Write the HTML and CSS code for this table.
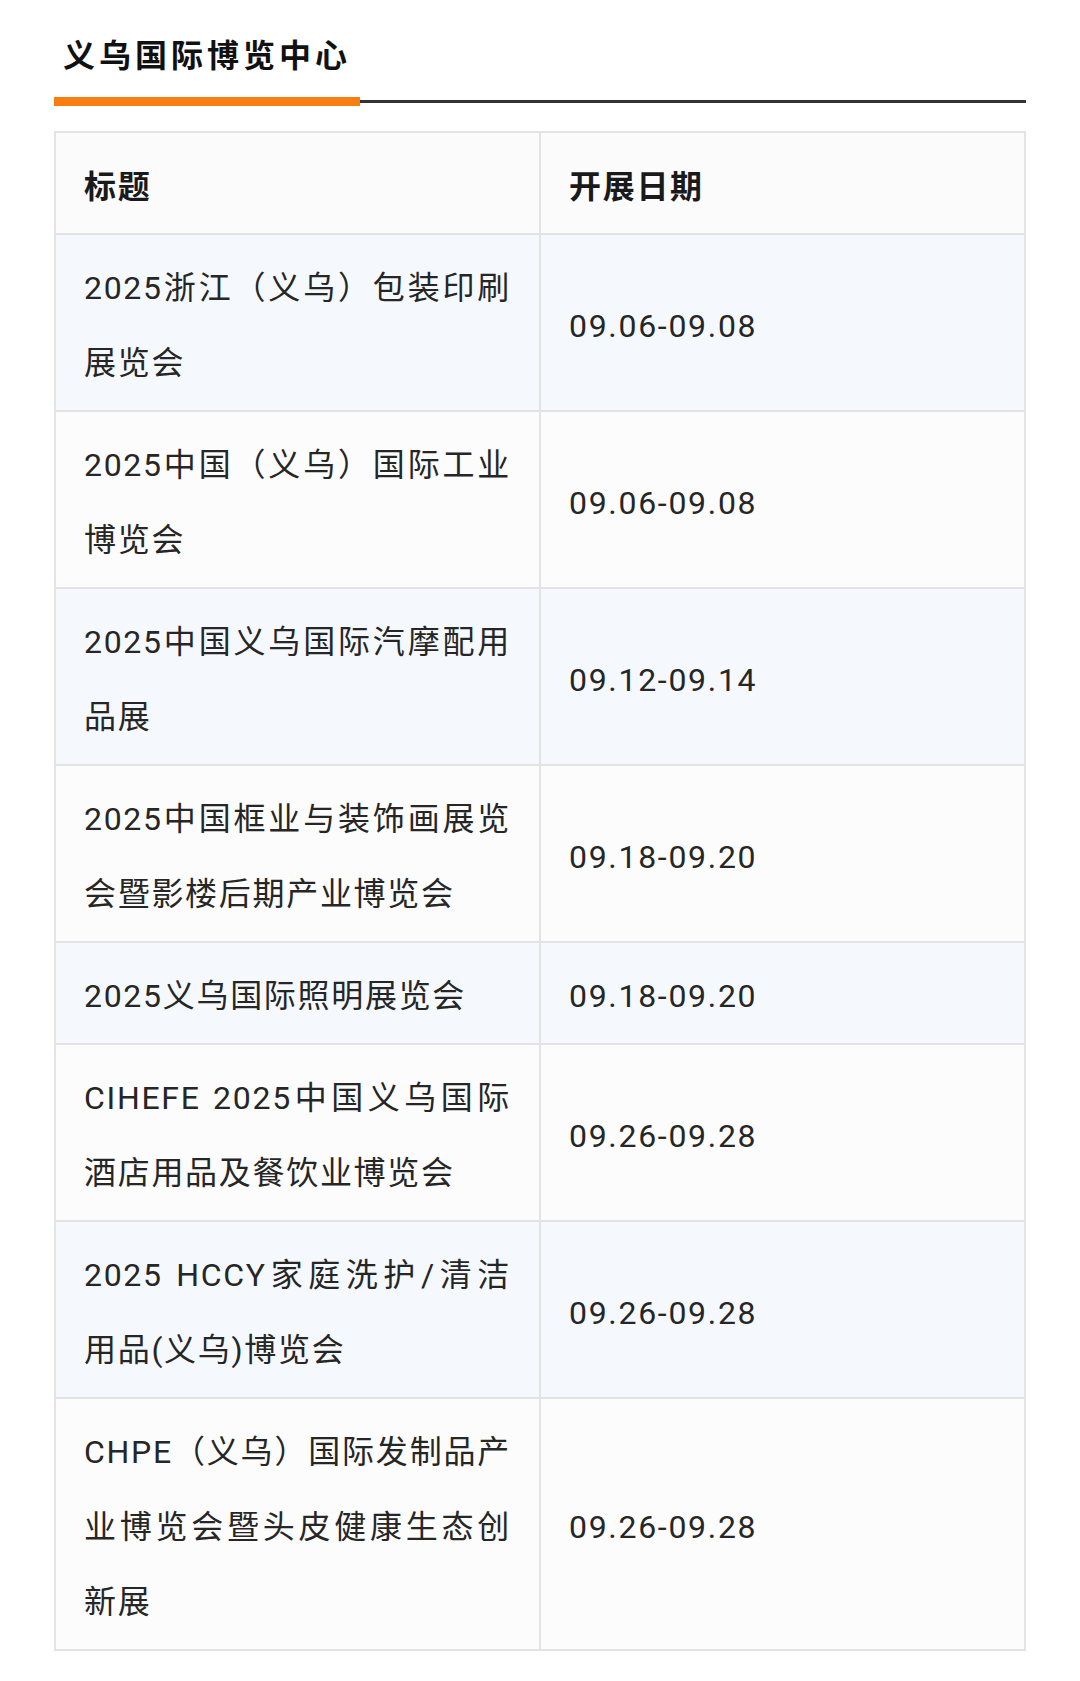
FILE: index.html
```html
<!DOCTYPE html>
<html lang="zh-CN">
<head>
<meta charset="utf-8">
<title>义乌国际博览中心</title>
<link rel="stylesheet" href="styles.css">
</head>
<body>
<div class="page">
  <h2 class="title">义乌国际博览中心</h2>
  <div class="rule"><span class="rule-accent"></span><span class="rule-line"></span></div>
  <table class="expo">
    <thead>
      <tr><th class="name">标题</th><th class="date">开展日期</th></tr>
    </thead>
    <tbody>
      <tr><td class="name">2025浙江（义乌）包装印刷展览会</td><td class="date">09.06-09.08</td></tr>
      <tr><td class="name">2025中国（义乌）国际工业博览会</td><td class="date">09.06-09.08</td></tr>
      <tr><td class="name">2025中国义乌国际汽摩配用品展</td><td class="date">09.12-09.14</td></tr>
      <tr><td class="name">2025中国框业与装饰画展览会暨影楼后期产业博览会</td><td class="date">09.18-09.20</td></tr>
      <tr><td class="name">2025义乌国际照明展览会</td><td class="date">09.18-09.20</td></tr>
      <tr><td class="name">CIHEFE 2025中国义乌国际酒店用品及餐饮业博览会</td><td class="date">09.26-09.28</td></tr>
      <tr><td class="name">2025 HCCY家庭洗护/清洁用品(义乌)博览会</td><td class="date">09.26-09.28</td></tr>
      <tr><td class="name">CHPE（义乌）国际发制品产业博览会暨头皮健康生态创新展</td><td class="date">09.26-09.28</td></tr>
    </tbody>
  </table>
</div>
</body>
</html>
```

FILE: styles.css
```css
html, body {
  margin: 0;
  padding: 0;
  background: #ffffff;
}

body {
  font-family: Roboto, "Noto Sans CJK SC", "Noto Sans", sans-serif;
  color: #222222;
}

.page {
  padding: 0 54px 20px;
}

.title {
  margin: 0;
  padding: 36px 0 0 9px;
  font-size: 32px;
  line-height: 40px;
  font-weight: 700;
  letter-spacing: 4px;
  color: #111111;
}

.rule {
  display: flex;
  align-items: center;
  height: 9px;
  margin-top: 21px;
}

.rule-accent {
  width: 306px;
  height: 9px;
  background: #fa7d10;
}

.rule-line {
  flex: 1;
  height: 3px;
  background: #333333;
}

.expo {
  width: 100%;
  margin-top: 25px;
  border-collapse: collapse;
  table-layout: fixed;
}

.expo th,
.expo td {
  border: 2px solid #e3e3e3;
  padding: 16px 28px 9px 28px;
  font-size: 32px;
  line-height: 75px;
  letter-spacing: 1.7px;
  vertical-align: middle;
  text-align: left;
}

.expo th {
  padding-top: 17px;
  padding-bottom: 8px;
  font-weight: 700;
  color: #1a1a1a;
  background: #fbfbfb;
}

.expo td {
  font-weight: 400;
  color: #262626;
}

.expo td.name {
  text-align: justify;
}

.expo tbody tr:nth-child(odd) td {
  background: #f5f9fe;
}

.expo tbody tr:nth-child(even) td {
  background: #fcfcfc;
}
```
